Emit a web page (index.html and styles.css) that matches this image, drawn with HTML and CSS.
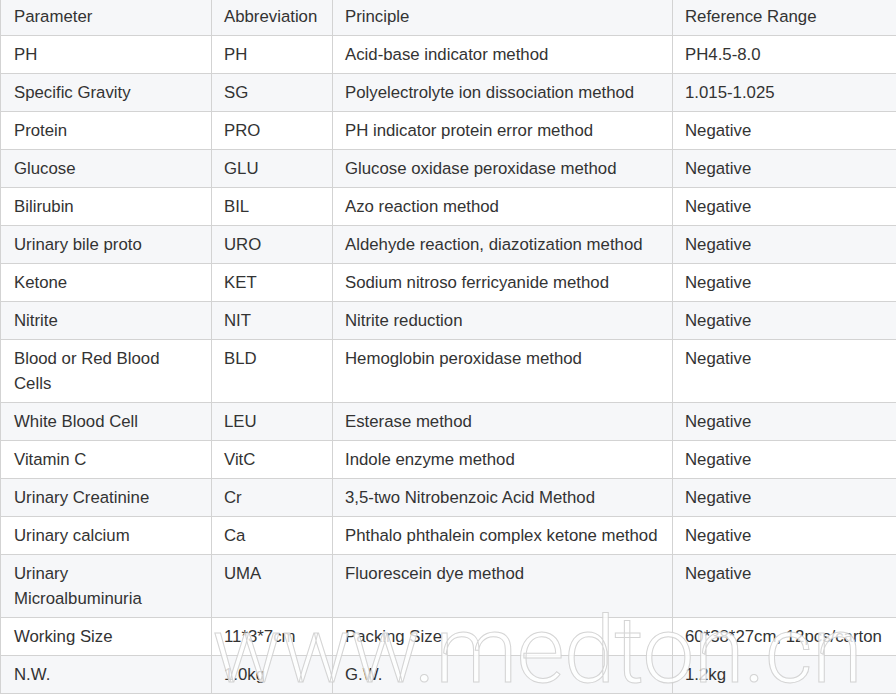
FILE: index.html
```html
<!DOCTYPE html>
<html>
<head>
<meta charset="utf-8">
<link rel="stylesheet" href="styles.css">
</head>
<body>
<div class="page">
<table class="spec">
<colgroup>
<col class="c1"><col class="c2"><col class="c3"><col class="c4">
</colgroup>
<tbody>
<tr><td>Parameter</td><td>Abbreviation</td><td>Principle</td><td>Reference Range</td></tr>
<tr><td>PH</td><td>PH</td><td>Acid-base indicator method</td><td>PH4.5-8.0</td></tr>
<tr><td>Specific Gravity</td><td>SG</td><td>Polyelectrolyte ion dissociation method</td><td>1.015-1.025</td></tr>
<tr><td>Protein</td><td>PRO</td><td>PH indicator protein error method</td><td>Negative</td></tr>
<tr><td>Glucose</td><td>GLU</td><td>Glucose oxidase peroxidase method</td><td>Negative</td></tr>
<tr><td>Bilirubin</td><td>BIL</td><td>Azo reaction method</td><td>Negative</td></tr>
<tr><td>Urinary bile proto</td><td>URO</td><td>Aldehyde reaction, diazotization method</td><td>Negative</td></tr>
<tr><td>Ketone</td><td>KET</td><td>Sodium nitroso ferricyanide method</td><td>Negative</td></tr>
<tr><td>Nitrite</td><td>NIT</td><td>Nitrite reduction</td><td>Negative</td></tr>
<tr><td>Blood or Red Blood Cells</td><td>BLD</td><td>Hemoglobin peroxidase method</td><td>Negative</td></tr>
<tr><td>White Blood Cell</td><td>LEU</td><td>Esterase method</td><td>Negative</td></tr>
<tr><td>Vitamin C</td><td>VitC</td><td>Indole enzyme method</td><td>Negative</td></tr>
<tr><td>Urinary Creatinine</td><td>Cr</td><td>3,5-two Nitrobenzoic Acid Method</td><td>Negative</td></tr>
<tr><td>Urinary calcium</td><td>Ca</td><td>Phthalo phthalein complex ketone method</td><td>Negative</td></tr>
<tr><td>Urinary Microalbuminuria</td><td>UMA</td><td>Fluorescein dye method</td><td>Negative</td></tr>
<tr><td>Working Size</td><td>11*3*7cm</td><td>Packing Size</td><td>60*38*27cm, 12pcs/carton</td></tr>
<tr><td>N.W.</td><td>1.0kg</td><td>G.W.</td><td>1.2kg</td></tr>
</tbody>
</table>
<div class="watermark">www.medton.cn</div>
</div>
</body>
</html>
```

FILE: styles.css
```css
html, body {
  margin: 0;
  padding: 0;
  background: #ffffff;
  overflow: hidden;
}
.page {
  position: relative;
  width: 896px;
  height: 694px;
  overflow: hidden;
}
.spec {
  margin-top: -3px;
  border-collapse: collapse;
  table-layout: fixed;
  width: 1000px;
  font-family: "Liberation Sans", Arial, sans-serif;
  font-size: 16.8px;
  line-height: 25px;
  color: #333333;
}
.c1 { width: 211px; }
.c2 { width: 121px; }
.c3 { width: 340px; }
.c4 { width: 328px; }
.spec td {
  border: 1px solid #d3d3d3;
  padding: 6px 12px;
  vertical-align: top;
  text-align: left;
}
.spec td:first-child {
  padding-left: 13px;
}
.spec tr:nth-child(odd) td {
  background: #f6f7f9;
}
.spec tr:nth-child(even) td {
  background: #ffffff;
}
.watermark {
  position: absolute;
  left: 212px;
  top: 591px;
  font-family: "Roboto", "Liberation Sans", sans-serif;
  font-weight: 300;
  font-size: 93px;
  line-height: 120px;
  letter-spacing: -1px;
  white-space: nowrap;
  color: rgba(255, 255, 255, 0.8);
  -webkit-text-stroke: 1px rgba(205, 205, 205, 0.85);
  pointer-events: none;
}
```
